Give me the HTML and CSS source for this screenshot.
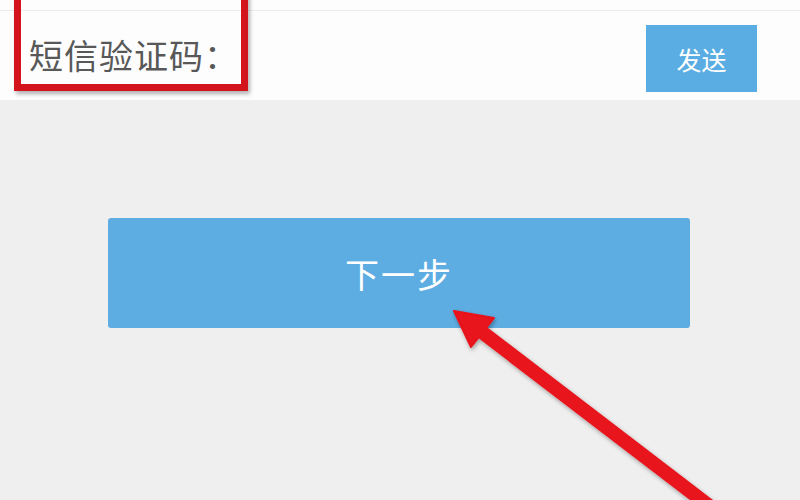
FILE: index.html
```html
<!DOCTYPE html>
<html lang="zh">
<head>
<meta charset="utf-8">
<link rel="stylesheet" href="styles.css">
</head>
<body>
<div class="page">
  <div class="form">
    <div class="row-prev"></div>
    <div class="row">
      <span class="label">短信验证码：</span>
      <button class="send">发送</button>
    </div>
  </div>
  <div class="main">
    <button class="next">下一步</button>
  </div>
  <div class="mark-box"></div>
  <svg class="arrow" width="800" height="500" viewBox="0 0 800 500">
    <defs>
      <filter id="sh" x="-20%" y="-20%" width="140%" height="140%">
        <feGaussianBlur in="SourceAlpha" stdDeviation="2"/>
        <feOffset dx="1" dy="2" result="b"/>
        <feFlood flood-color="#000" flood-opacity="0.35"/>
        <feComposite in2="b" operator="in"/>
        <feMerge><feMergeNode/><feMergeNode in="SourceGraphic"/></feMerge>
      </filter>
    </defs>
    <g filter="url(#sh)" fill="#e8121a" stroke="#e8121a">
      <line x1="478" y1="329" x2="712" y2="508" stroke-width="14"/>
      <polygon points="454,311 494,318 471,347" stroke-width="2" stroke-linejoin="round"/>
    </g>
  </svg>
</div>
</body>
</html>
```
FILE: styles.css
```css
html, body {
  margin: 0;
  padding: 0;
}
body {
  background: #efefef;
  font-family: "Noto Sans CJK SC", "Noto Sans", sans-serif;
}
.page {
  position: relative;
  width: 800px;
  height: 500px;
  overflow: hidden;
}
.form {
  background: #fdfdfd;
  height: 100px;
}
.row-prev {
  height: 10px;
  border-bottom: 1px solid #ececec;
}
.row {
  display: flex;
  align-items: flex-start;
  justify-content: space-between;
  height: 89px;
}
.label {
  margin-left: 29px;
  margin-top: 22px;
  font-size: 34px;
  line-height: 44px;
  color: #585858;
  letter-spacing: 1px;
}
.send {
  margin-top: 14px;
  margin-right: 43px;
  width: 111px;
  height: 67px;
  border: none;
  background: #5aade2;
  color: #fff;
  font-family: inherit;
  font-size: 25px;
  padding: 0;
}
.main {
  padding: 118px 110px 0 108px;
}
.next {
  display: block;
  width: 582px;
  height: 110px;
  border: none;
  border-radius: 3px;
  background: #5eade2;
  color: #fff;
  font-family: inherit;
  font-size: 34px;
  letter-spacing: 2px;
  padding: 0;
}
.mark-box {
  position: absolute;
  left: 14px;
  top: -12px;
  width: 220px;
  height: 89px;
  border: 7px solid #d3141c;
  box-shadow: 2px 3px 4px rgba(0,0,0,0.3);
}
.arrow {
  position: absolute;
  left: 0;
  top: 0;
}
```
